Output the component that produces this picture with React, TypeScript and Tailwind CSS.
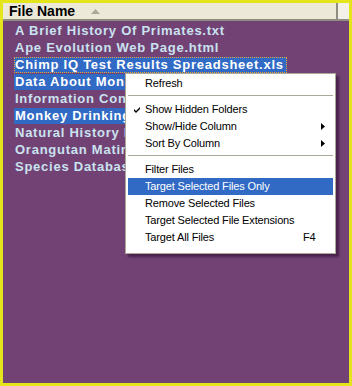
import React from "react";

const files = [
  { name: "A Brief History Of Primates.txt", sel: false, focus: false },
  { name: "Ape Evolution Web Page.html", sel: false, focus: false },
  { name: "Chimp IQ Test Results Spreadsheet.xls", sel: true, focus: true },
  { name: "Data About Monkey Behaviour.doc", sel: true, focus: false },
  { name: "Information Concerning Gorillas.txt", sel: false, focus: false },
  { name: "Monkey Drinking Habits.xls", sel: true, focus: false },
  { name: "Natural History Museum Notes.txt", sel: false, focus: false },
  { name: "Orangutan Mating Rituals.doc", sel: false, focus: false },
  { name: "Species Database.mdb", sel: false, focus: false },
];

type Item =
  | { sep: true }
  | { sep?: false; label: string; check?: boolean; sub?: boolean; key?: string; hi?: boolean };

const menu: Item[] = [
  { label: "Refresh" },
  { sep: true },
  { label: "Show Hidden Folders", check: true },
  { label: "Show/Hide Column", sub: true },
  { label: "Sort By Column", sub: true },
  { sep: true },
  { label: "Filter Files" },
  { label: "Target Selected Files Only", hi: true },
  { label: "Remove Selected Files" },
  { label: "Target Selected File Extensions" },
  { label: "Target All Files", key: "F4" },
];

export default function App() {
  return (
    <div className="relative w-[352px] h-[386px] bg-[#e5e51c] p-[3px] overflow-hidden">
      <div className="w-full h-full bg-[#724275] flex flex-col">
        <div className="flex h-[18px] border-b-2 border-[#8f8c80] bg-[#ece9d8]">
          <div className="w-[335px] flex items-center pl-[6px] border-r-2 border-[#8f8c80]">
            <span
              className="text-[14px] font-bold text-black leading-none"
              style={{ fontFamily: '"Liberation Sans", Arial, sans-serif' }}
            >
              File Name
            </span>
            <svg width="9" height="5" viewBox="0 0 9 5" className="ml-[16px]">
              <polygon points="0,5 9,5 4.5,0" fill="#aca899" />
            </svg>
          </div>
          <div className="flex-1 bg-[#f3f1e8]" />
        </div>
        <div
          className="flex flex-col pt-[1px]"
          style={{ fontFamily: '"Liberation Sans", Arial, sans-serif' }}
        >
          {files.map((f) => (
            <div key={f.name} className="h-[17px] flex items-center pl-[11px]">
              <span
                className={
                  "h-[16px] flex items-center pl-[1px] pr-[3px] text-[13px] font-bold leading-none whitespace-nowrap tracking-[0.75px] " +
                  (f.sel ? "bg-[#316ac5] text-white " : "text-[#c9e3ef] ") +
                  (f.focus ? "outline-1 outline-dotted outline-[#f0a030] -outline-offset-1" : "")
                }
              >
                {f.name}
              </span>
            </div>
          ))}
        </div>
      </div>

      <div
        className="absolute left-[125px] top-[73px] w-[211px] bg-white border border-[#aca899] pt-[1px] pb-[7px] shadow-[3px_3px_2px_rgba(40,10,40,0.55)]"
        style={{ fontFamily: '"Liberation Sans", Tahoma, sans-serif' }}
      >
        {menu.map((m, i) =>
          m.sep ? (
            <div key={i} className="h-[9px] px-[2px] pt-[3px]">
              <div className="h-[1px] bg-[#aca899]" />
            </div>
          ) : (
            <div
              key={i}
              className={
                "relative h-[17px] mx-[2px] flex items-center text-[11px] leading-none tracking-[-0.15px] " +
                (m.hi ? "bg-[#316ac5] text-white" : "text-black")
              }
            >
              <span className="w-[17px] flex justify-center pl-[1px]">
                {m.check && (
                  <svg width="7" height="7" viewBox="0 0 7 7">
                    <path d="M0 3 L2 5 L6 1 L6 3 L2 7 L0 5 Z" fill="#000" />
                  </svg>
                )}
              </span>
              <span className="whitespace-nowrap">{m.label}</span>
              {m.key && <span className="absolute left-[175px]">{m.key}</span>}
              {m.sub && (
                <svg width="4" height="7" viewBox="0 0 4 7" className="absolute right-[8px]">
                  <polygon points="0,0 4,3.5 0,7" fill="#000" />
                </svg>
              )}
            </div>
          )
        )}
      </div>
    </div>
  );
}
